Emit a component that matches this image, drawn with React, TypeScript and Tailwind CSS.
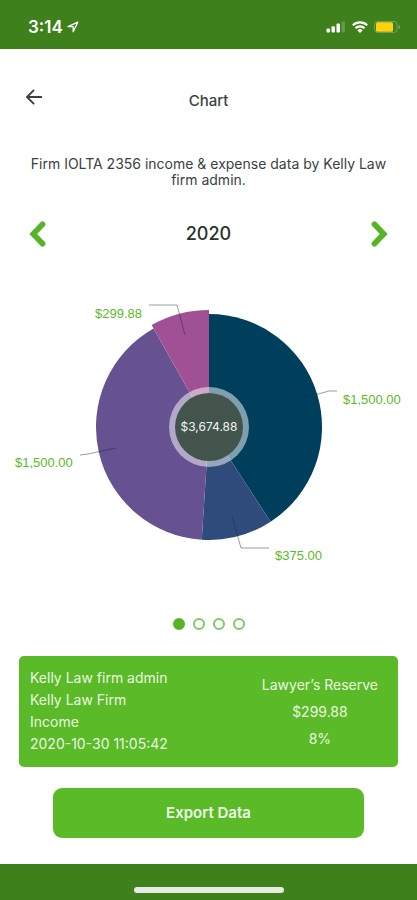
import { useState } from "react";

interface Slice {
  amount: number;
  color: string;
  radius: number;
  /** Leader line from the slice to its label. */
  leader: string;
  labelX: number;
  labelY: number;
}

const CENTER_X = 209;
const CENTER_Y = 137;

const slices: Slice[] = [
  { amount: 1500, color: "#003f5c", radius: 113, leader: "300,109 329,101 337,101", labelX: 343, labelY: 114 },
  { amount: 375, color: "#2f4b7c", radius: 113, leader: "232,226 241,258 269,258", labelX: 275, labelY: 270 },
  { amount: 1500, color: "#665191", radius: 113, leader: "116,158 88,164 80,165", labelX: 15, labelY: 177 },
  { amount: 299.88, color: "#a05195", radius: 117, leader: "185,45 177,15 149,15", labelX: 95, labelY: 28 },
];

const total = slices.reduce((sum, s) => sum + s.amount, 0);

function formatMoney(value: number) {
  return "$" + value.toLocaleString("en-US", { minimumFractionDigits: 2, maximumFractionDigits: 2 });
}

function point(angle: number, radius: number) {
  const x = CENTER_X + radius * Math.sin(angle);
  const y = CENTER_Y - radius * Math.cos(angle);
  return `${x.toFixed(2)} ${y.toFixed(2)}`;
}

function slicePath(index: number) {
  const before = slices.slice(0, index).reduce((sum, s) => sum + s.amount, 0);
  const { amount, radius } = slices[index];
  const start = (before / total) * Math.PI * 2;
  const end = ((before + amount) / total) * Math.PI * 2;
  return `M${CENTER_X} ${CENTER_Y} L${point(start, radius)} A${radius} ${radius} 0 0 1 ${point(end, radius)} Z`;
}

function StatusBar() {
  return (
    <div className="flex h-[49px] shrink-0 items-center justify-between bg-[#3e811c] pr-4 pl-7 pt-1 text-white">
      <div className="flex items-center gap-1">
        <span className="text-[17px] leading-5 font-semibold">3:14</span>
        <svg className="h-3 w-3" viewBox="0 0 12 12" fill="none" stroke="currentColor" strokeWidth="1.3" strokeLinejoin="round" aria-hidden>
          <path d="M10.8 1.2 1 5.6h5.2v5.2z" />
        </svg>
      </div>
      <div className="flex items-center gap-[6px]">
        <svg className="h-3 w-5" viewBox="0 0 20 12" fill="currentColor" aria-hidden>
          <rect x="0.5" y="7.5" width="3.4" height="4" rx="0.9" />
          <rect x="5.5" y="5.2" width="3.4" height="6.3" rx="0.9" />
          <rect x="10.5" y="2.6" width="3.4" height="8.9" rx="0.9" />
          <rect x="15.5" y="0.4" width="3.4" height="11.1" rx="0.9" opacity="0.2" />
        </svg>
        <svg className="h-3 w-4" viewBox="0 0 16 12" fill="none" stroke="currentColor" strokeWidth="2.3" aria-hidden>
          <path d="M.8 4.3a10.2 10.2 0 0 1 14.4 0" />
          <path d="M3.5 7.2a6.4 6.4 0 0 1 9 0" />
          <path d="M8 12 5.3 9.4a3.8 3.8 0 0 1 5.4 0z" fill="currentColor" stroke="none" />
        </svg>
        <svg className="h-3 w-[27px]" viewBox="0 0 27 12" aria-hidden>
          <rect x="0.5" y="0.5" width="22.6" height="11" rx="3.2" fill="none" stroke="#fff" strokeOpacity="0.25" />
          <rect x="2" y="1.2" width="17" height="9.6" rx="1.5" fill="#fcd20c" />
          <path d="M24.6 4v4c1-.4 1.5-1.1 1.5-2s-.5-1.6-1.5-2z" fill="#fff" opacity="0.35" />
        </svg>
      </div>
    </div>
  );
}

function PieChart() {
  return (
    <svg className="w-full" viewBox="0 0 417 290" role="img" aria-label="Income and expenses by account">
      {slices.map((slice, i) => (
        <path key={i} d={slicePath(i)} fill={slice.color} />
      ))}
      {slices.map((slice, i) => (
        <g key={i}>
          <polyline points={slice.leader} fill="none" stroke="#1d2330" strokeOpacity="0.45" strokeWidth="1" />
          <text
            x={slice.labelX}
            y={slice.labelY}
            className="fill-[#5aba27] font-['Liberation_Sans',sans-serif] text-[13px]"
          >
            {formatMoney(slice.amount)}
          </text>
        </g>
      ))}
      <circle cx={CENTER_X} cy={CENTER_Y} r="40" fill="#fff" fillOpacity="0.5" />
      <circle cx={CENTER_X} cy={CENTER_Y} r="34" fill="#43544d" />
      <text x={CENTER_X} y={CENTER_Y + 4} textAnchor="middle" className="fill-[#f1f3f2] text-[12px]">
        {formatMoney(total)}
      </text>
    </svg>
  );
}

export default function App() {
  const [year, setYear] = useState(2020);
  const [page, setPage] = useState(0);

  return (
    <div className="flex min-h-screen flex-col bg-white font-[Inter,sans-serif] text-[#39423f]">
      <StatusBar />

      <header className="grid grid-cols-[1fr_auto_1fr] px-6 pt-[38px]">
        <button type="button" aria-label="Back" className="h-5 w-5">
          <svg className="h-5 w-5" viewBox="0 0 20 20" fill="none" stroke="#39423f" strokeWidth="1.9" strokeLinecap="round" strokeLinejoin="round" aria-hidden>
            <path d="M17.3 10H3M9.6 3.4 3 10l6.6 6.6" />
          </svg>
        </button>
        <h1 className="pt-1 text-[15px] leading-5 font-medium">Chart</h1>
      </header>

      <p className="mt-[45px] px-6 text-center text-[14px] leading-4">
        Firm IOLTA 2356 income &amp; expense data by Kelly Law firm admin.
      </p>

      <div className="mt-8 flex items-center justify-between px-7">
        <button type="button" aria-label="Previous year" onClick={() => setYear(year - 1)}>
          <svg className="h-7 w-5" viewBox="0 0 20 28" fill="none" stroke="#55b524" strokeWidth="5.6" strokeLinecap="round" strokeLinejoin="miter" aria-hidden>
            <path d="M14.6 4.2 5.2 14l9.4 9.8" />
          </svg>
        </button>
        <h2 className="text-[18px] leading-7 font-medium text-[#29332f]">{year}</h2>
        <button type="button" aria-label="Next year" onClick={() => setYear(year + 1)}>
          <svg className="h-7 w-5" viewBox="0 0 20 28" fill="none" stroke="#55b524" strokeWidth="5.6" strokeLinecap="round" strokeLinejoin="miter" aria-hidden>
            <path d="m5.4 4.2 9.4 9.8-9.4 9.8" />
          </svg>
        </button>
      </div>

      <div className="mt-[42px]">
        <PieChart />
      </div>

      <div className="mt-[38px] flex justify-center gap-2">
        {[0, 1, 2, 3].map((i) => (
          <button
            key={i}
            type="button"
            aria-label={`Page ${i + 1}`}
            onClick={() => setPage(i)}
            className={`h-3 w-3 rounded-full border-2 ${i === page ? "border-[#55b524] bg-[#55b524]" : "border-[#84c765]"}`}
          />
        ))}
      </div>

      <section className="mx-[19px] mt-[26px] flex items-center justify-between rounded-[5px] bg-[#5aba27] pt-[11px] pr-5 pb-3 pl-[11px] text-[#e9f6e1]">
        <div className="text-[14px] leading-[22px]">
          <p>Kelly Law firm admin</p>
          <p>Kelly Law Firm</p>
          <p>Income</p>
          <p>2020-10-30 11:05:42</p>
        </div>
        <div className="text-center text-[14px] leading-[27px]">
          <p>Lawyer’s Reserve</p>
          <p>$299.88</p>
          <p>8%</p>
        </div>
      </section>

      <button
        type="button"
        className="mx-[53px] mt-[21px] h-[50px] rounded-[9px] bg-[#5aba27] text-[15px] font-semibold text-[#effae9]"
      >
        Export Data
      </button>

      <footer className="mt-auto flex h-9 items-end justify-center bg-[#3e811c] pb-[7px]">
        <div className="h-[6px] w-[150px] rounded-full bg-[#e8ebe4]" />
      </footer>
    </div>
  );
}
